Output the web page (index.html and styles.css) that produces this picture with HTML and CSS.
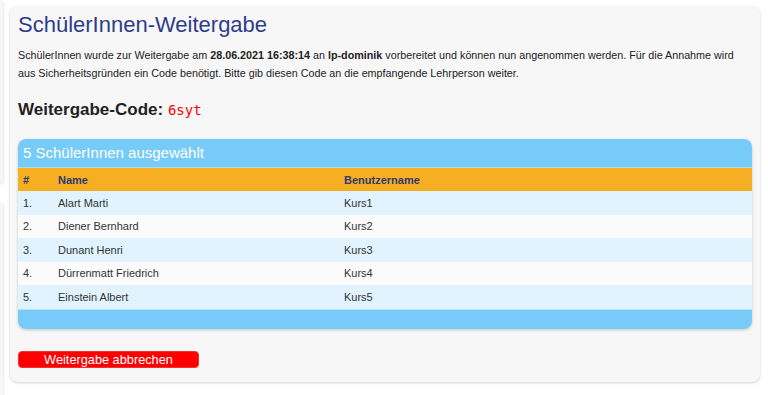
FILE: index.html
```html
<!DOCTYPE html>
<html>
<head>
<meta charset="utf-8">
<title>SchülerInnen-Weitergabe</title>
<link rel="stylesheet" href="styles.css">
</head>
<body>
<div class="page">
	<div class="aside">
		<div class="stub stub_top"></div>
		<div class="stub stub_bottom"></div>
	</div>
	<div class="card">
		<h1 class="title">SchülerInnen-Weitergabe</h1>
		<p class="intro"><span>SchülerInnen wurde zur Weitergabe am <b>28.06.2021 16:38:14</b> an <b>lp-dominik</b> vorbereitet und können nun angenommen werden. Für die Annahme wird</span> <span>aus Sicherheitsgründen ein Code benötigt. Bitte gib diesen Code an die empfangende Lehrperson weiter.</span></p>
		<h2 class="code_title">Weitergabe-Code: <span class="code">6syt</span></h2>

		<div class="list">
			<div class="list_head">5 SchülerInnen ausgewählt</div>
			<table class="list_table">
				<thead>
					<tr><th class="col_nr">#</th><th class="col_name">Name</th><th>Benutzername</th></tr>
				</thead>
				<tbody>
					<tr><td>1.</td><td>Alart Marti</td><td>Kurs1</td></tr>
					<tr><td>2.</td><td>Diener Bernhard</td><td>Kurs2</td></tr>
					<tr><td>3.</td><td>Dunant Henri</td><td>Kurs3</td></tr>
					<tr><td>4.</td><td>Dürrenmatt Friedrich</td><td>Kurs4</td></tr>
					<tr><td>5.</td><td>Einstein Albert</td><td>Kurs5</td></tr>
				</tbody>
			</table>
			<div class="list_foot"></div>
		</div>

		<button class="btn_cancel" type="button">Weitergabe abbrechen</button>
	</div>
</div>
</body>
</html>
```

FILE: styles.css
```css
html,body{margin: 0;padding: 0;background: #fff;}
body{font-family: "Liberation Sans", Arial, sans-serif;color: #222;}
.page{display: flex;align-items: flex-start;}

.aside{width: 3px;flex-shrink: 0;display: flex;flex-direction: column;gap: 19px;}
.stub{width: 3px;background: #f7f7f7;border-radius: 0 6px 6px 0;box-shadow: 0 1px 3px rgba(0,0,0,0.18);}
.stub_top{height: 183px;}
.stub_bottom{height: 200px;}

.card{flex: 1;margin: 6px 8px 12px 7px;padding: 6px 8px 14px 8px;background: #f7f7f7;border-radius: 8px;box-shadow: 0 1px 3px rgba(0,0,0,0.18);}
.title{margin: 0;font-size: 22px;font-weight: normal;color: #2d3d8a;line-height: 25px;}
.intro{margin: 9px 0 0 0;font-size: 10.75px;line-height: 18px;color: #222;}
.intro span{display: inline-block;}
.code_title{margin: 17px 0 0 0;font-size: 17px;line-height: 22px;color: #222;}
.code{font-family: "DejaVu Sans Mono", "Liberation Mono", monospace;font-weight: normal;font-size: 14px;color: #f00;}

.list{margin-top: 18px;border-radius: 8px;overflow: hidden;box-shadow: 0 1px 3px rgba(0,0,0,0.2);}
.list_head{background: #76cbf9;color: #fff;font-size: 15px;line-height: 28px;padding: 0 5px;border-bottom: 1px solid #a8dcf7;}
.list_table{width: 100%;border-collapse: collapse;font-size: 11px;}
.list_table th{background: #f6ae23;color: #2e3a6e;text-align: left;font-weight: bold;height: 23px;padding: 0 5px;}
.list_table td{height: 23.5px;padding: 0 5px;color: #333;}
.list_table .col_nr{width: 25px;}
.list_table .col_name{width: 276px;}
.list_table tbody tr:nth-child(odd) td{background: #e0f3fe;}
.list_table tbody tr:nth-child(even) td{background: #fbfbfb;}
.list_foot{background: #76cbf9;height: 19px;border-top: 1px solid #b9dff2;}

.btn_cancel{display: block;margin-top: 22px;width: 181px;height: 17px;padding: 0;background: #f00;color: #fff;border: 1px solid #e33;border-radius: 4px;font-family: "Liberation Sans", Arial, sans-serif;font-size: 12.75px;line-height: 15px;}
```
